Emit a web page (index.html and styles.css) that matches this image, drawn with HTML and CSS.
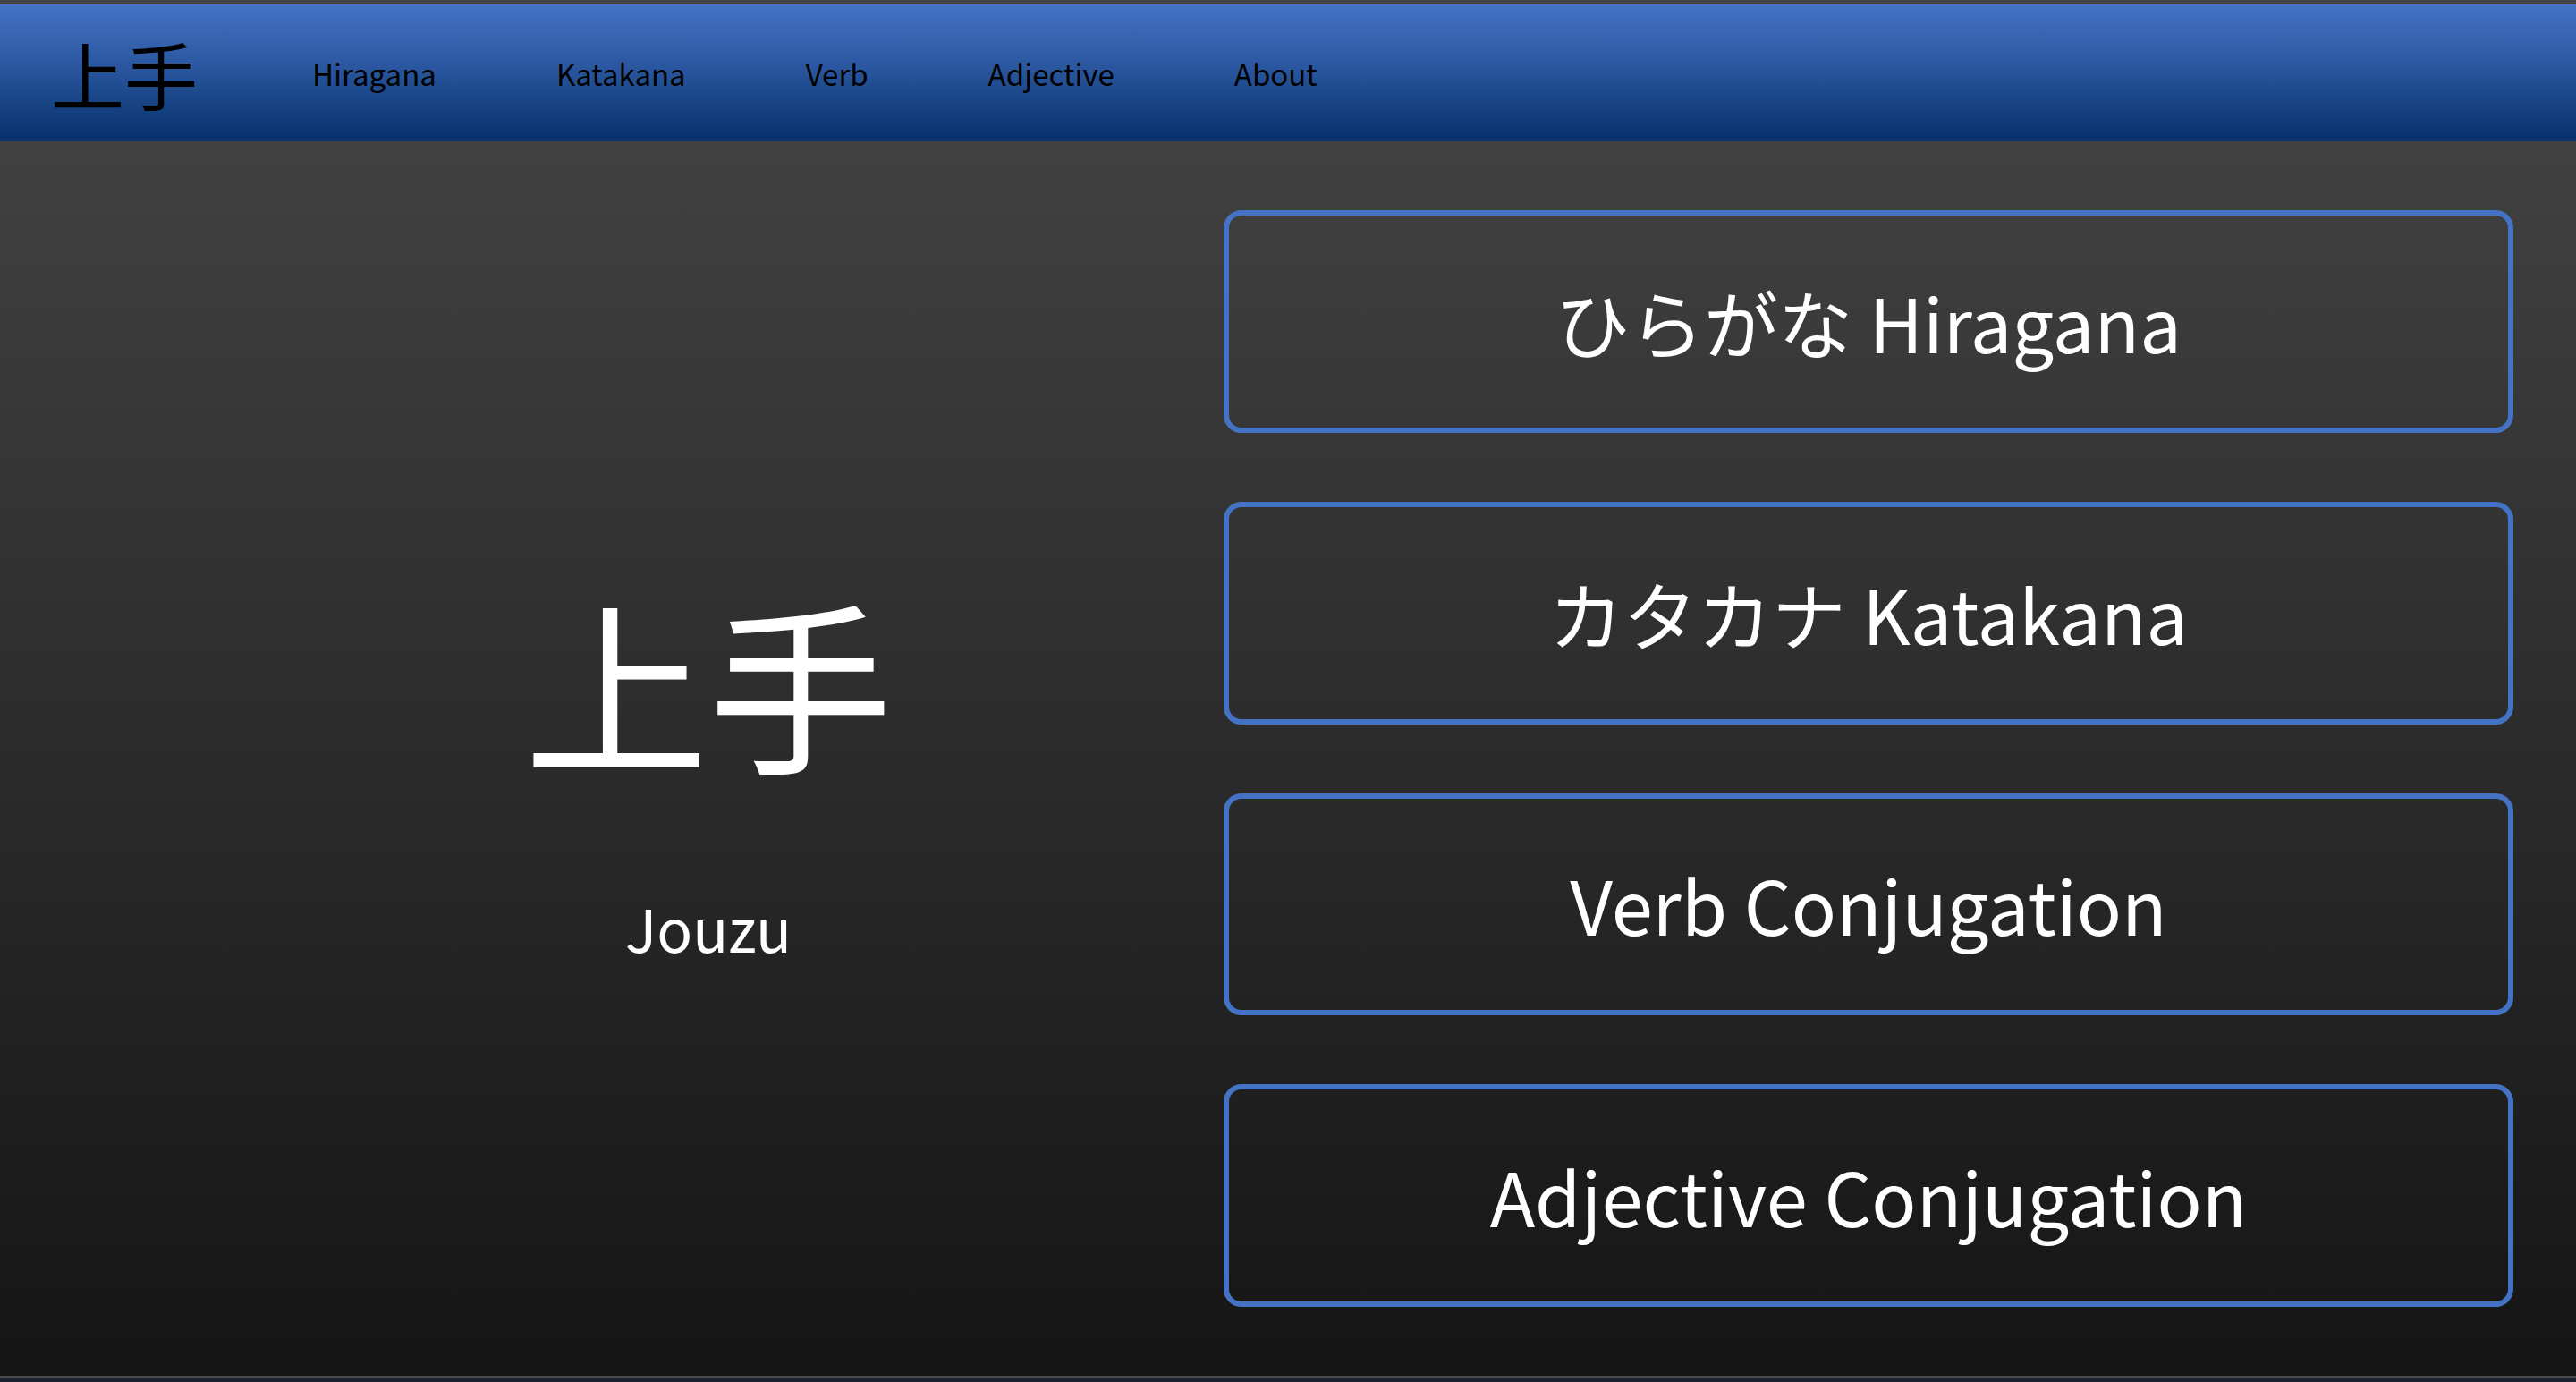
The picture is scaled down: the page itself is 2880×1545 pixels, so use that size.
FILE: index.html
```html
<!DOCTYPE html>
<html lang="ja">
<head>
<meta charset="utf-8">
<title>上手 Jouzu</title>
<link rel="stylesheet" href="styles.css">
</head>
<body>
<div class="topstrip"></div>
<nav class="navbar">
  <a class="brand" href="#">上手</a>
  <ul class="nav-links">
    <li><a href="#">Hiragana</a></li>
    <li><a href="#">Katakana</a></li>
    <li><a href="#">Verb</a></li>
    <li><a href="#">Adjective</a></li>
    <li><a href="#">About</a></li>
  </ul>
</nav>
<main class="main">
  <section class="hero">
    <div class="hero-kanji">上手</div>
    <div class="hero-romaji">Jouzu</div>
  </section>
  <section class="menu">
    <a class="menu-btn" href="#">ひらがな Hiragana</a>
    <a class="menu-btn" href="#">カタカナ Katakana</a>
    <a class="menu-btn" href="#">Verb Conjugation</a>
    <a class="menu-btn" href="#">Adjective Conjugation</a>
  </section>
</main>
<div class="bottom-line"></div>
<div class="bottom-strip"></div>
</body>
</html>
```

FILE: styles.css
```css
* { box-sizing: border-box; }
html, body {
  margin: 0;
  padding: 0;
  height: 100%;
}
body {
  font-family: "Noto Sans CJK JP", "Noto Sans", sans-serif;
  background: #151515;
  overflow: hidden;
}
a { text-decoration: none; color: inherit; }

.topstrip {
  height: 5px;
  background: #444444;
}

.navbar {
  height: 153px;
  display: flex;
  align-items: center;
  padding-left: 57px;
  background: linear-gradient(to bottom, #4573c5 0%, #2a579f 45%, #05306a 100%);
}
.brand {
  font-size: 82px;
  line-height: 1;
  color: #000;
}
.nav-links {
  list-style: none;
  display: flex;
  gap: 134px;
  margin: 0 0 0 128px;
  padding: 3px 0 0 0;
}
.nav-links a {
  font-size: 33px;
  color: #000;
  line-height: 1;
}

.main {
  height: 1380px;
  display: flex;
  background: linear-gradient(to bottom, #414141 0%, #151515 100%);
}
.hero {
  flex: 1;
  padding: 499px 0 0 216px;
  display: flex;
  flex-direction: column;
  align-items: center;
  color: #fff;
}
.hero-kanji {
  font-size: 206px;
  line-height: 1;
}
.hero-romaji {
  font-size: 66px;
  line-height: 1;
  margin-top: 140px;
}
.menu {
  width: 1442px;
  margin-right: 70px;
  display: flex;
  flex-direction: column;
  gap: 77px;
  padding: 77px 0;
}
.menu-btn {
  height: 249px;
  border: 6px solid #4472c4;
  border-radius: 20px;
  display: flex;
  align-items: center;
  justify-content: center;
  color: #fff;
  font-size: 83px;
  line-height: 1;
}

.bottom-line {
  height: 2px;
  background: #4a4a4a;
}
.bottom-strip {
  height: 5px;
  background: #1f2230;
}
```
